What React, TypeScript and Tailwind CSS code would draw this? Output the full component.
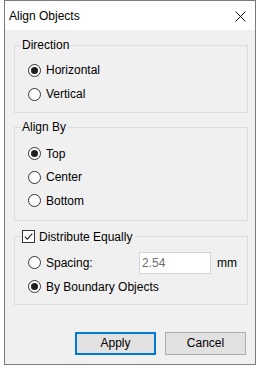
import React from "react"

type RadioProps = {
    label: string,
    checked?: boolean,
    rowClass?: string
}

function Radio(props: RadioProps) {
    return (
        <label className={"flex items-center " + (props.rowClass ?? "h-[24px]")}>
            <span className="flex items-center justify-center w-[13px] h-[13px] rounded-full border border-[#333333] bg-white">
                {props.checked && <span className="w-[7px] h-[7px] rounded-full bg-[#1f1f1f]" />}
            </span>
            <span className="ml-[5px]">{props.label}</span>
        </label>
    )
}

function CheckBox({ label }: { label: string }) {
    return (
        <span className="flex items-center">
            <span className="flex items-center justify-center w-[13px] h-[13px] border border-[#333333] bg-white">
                <svg width="11" height="11" viewBox="0 0 11 11">
                    <path d="M1.8 5.6 L4.3 8.1 L9.3 2.6" fill="none" stroke="#222" strokeWidth="1.1" />
                </svg>
            </span>
            <span className="ml-[4px]">{label}</span>
        </span>
    )
}

export default function App() {
    return (
        <div className="w-[263px] h-[368px] bg-white text-[12px] leading-[16px] text-black font-['Liberation_Sans',Arial,sans-serif]">
            <div className="ml-[4px] w-[252px] h-[365px] border border-[#7a7a7a] flex flex-col">
                {/* title bar */}
                <div className="h-[29px] bg-white flex items-center justify-between pl-[4px] pr-[9px] shrink-0">
                    <span>Align Objects</span>
                    <svg width="11" height="11" viewBox="0 0 11 11" className="mt-[2px]">
                        <path d="M0.5 0.5 L10.5 10.5 M10.5 0.5 L0.5 10.5" stroke="#111" strokeWidth="1" />
                    </svg>
                </div>

                <div className="flex-1 bg-[#f0f0f0] pt-[7px] pl-[9px]">
                    <fieldset className="w-[234px] border border-[#dcdcdc] pl-[6px] pt-[5px] pb-[6px]">
                        <legend className="px-[1px]">Direction</legend>
                        <div className="ml-[7px]">
                            <Radio label="Horizontal" checked />
                            <Radio label="Vertical" />
                        </div>
                    </fieldset>

                    <fieldset className="mt-[6px] w-[234px] border border-[#dcdcdc] pl-[6px] pt-[7px] pb-[7px]">
                        <legend className="px-[1px]">Align By</legend>
                        <div className="ml-[7px]">
                            <Radio label="Top" checked rowClass="h-[23.5px]" />
                            <Radio label="Center" rowClass="h-[23.5px]" />
                            <Radio label="Bottom" rowClass="h-[23.5px]" />
                        </div>
                    </fieldset>

                    <fieldset className="mt-[8px] w-[234px] border border-[#dcdcdc] pl-[6px] pt-[6px] pb-[5px]">
                        <legend className="pl-[1px] pr-[3px]">
                            <CheckBox label="Distribute Equally" />
                        </legend>
                        <div className="ml-[7px]">
                            <div className="flex items-center h-[24px]">
                                <div className="w-[111px]">
                                    <Radio label="Spacing:" />
                                </div>
                                <div className="w-[72px] h-[22px] border border-[#d4d4d4] bg-white flex items-center px-[2px] text-[#6d6d6d]">
                                    2.54
                                </div>
                                <span className="ml-[6px]">mm</span>
                            </div>
                            <Radio label="By Boundary Objects" checked />
                        </div>
                    </fieldset>

                    <div className="flex justify-end gap-[9px] mt-[27px] w-[232px]">
                        <button className="w-[81px] h-[23px] bg-[#e1e1e1] border-2 border-[#0078d7]">Apply</button>
                        <button className="w-[81px] h-[23px] bg-[#e1e1e1] border border-[#adadad]">Cancel</button>
                    </div>
                </div>
            </div>
        </div>
    )
}
